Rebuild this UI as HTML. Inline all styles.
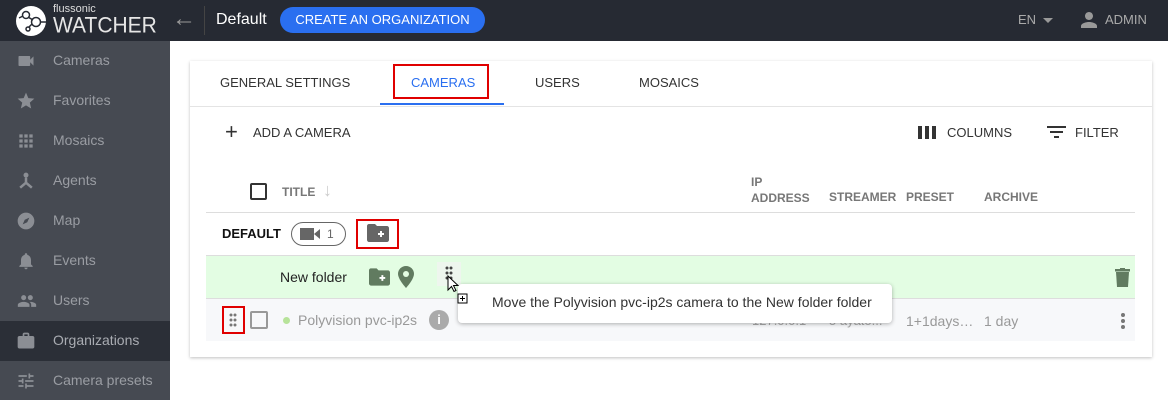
<!DOCTYPE html>
<html><head><meta charset="utf-8"><style>
*{box-sizing:border-box;margin:0;padding:0}
body{width:1168px;height:400px;overflow:hidden;font-family:"Liberation Sans",Arial,sans-serif;background:#fff;position:relative}
.abs{position:absolute}
.hdr{left:0;top:0;width:1168px;height:41px;background:#262a33}
.side{left:0;top:41px;width:170px;height:359px;background:#464a52}
.si{position:absolute;left:0;width:170px;height:40px;color:#9a9da3;font-size:14px;line-height:39px;padding-left:53px}
.si svg{position:absolute;left:15px;top:10px}
.card{left:190px;top:61px;width:962px;height:296px;background:#fff;box-shadow:0 1px 3px rgba(0,0,0,.25)}
.t{font-size:13px;color:#333}
.th{font-size:12px;color:#777;font-weight:bold}
.red{border:2px solid #e00000}
</style></head><body>
<div class="abs hdr"></div>
<svg class="abs" style="left:15px;top:5px" width="32" height="32" viewBox="0 0 32 32"><circle cx="16" cy="16" r="15" fill="#fff"/><circle cx="11" cy="10" r="3.5" fill="none" stroke="#262a33" stroke-width="1.5"/><circle cx="21" cy="17" r="4.5" fill="none" stroke="#262a33" stroke-width="1.5"/><circle cx="13" cy="24" r="2" fill="none" stroke="#262a33" stroke-width="1.5"/><path d="M13 12 L18 15 M17 19 L14 22 M4 13 L8 11 M25 17 L31 17" stroke="#262a33" stroke-width="1.5"/></svg>
<div class="abs" style="left:53px;top:3px;color:#ddd;font-size:11px">flussonic</div>
<div class="abs" style="left:53px;top:14px;color:#e6e6e6;font-size:21px;transform:scaleY(1.05)">WATCHER</div>
<div class="abs" style="left:172px;top:5px;color:#999;font-size:24px">&#8592;</div>
<div class="abs" style="left:204px;top:6px;width:1px;height:29px;background:#444"></div>
<div class="abs" style="left:216px;top:11px;color:#fff;font-size:16px">Default</div>
<div class="abs" style="left:280px;top:7px;width:205px;height:26px;background:#2a6ff0;border-radius:13px;color:#fff;font-size:13px;line-height:26px;text-align:center">CREATE AN ORGANIZATION</div>
<div class="abs" style="left:1018px;top:12px;color:#aaa;font-size:13px">EN</div>
<div class="abs" style="left:1043px;top:18px;width:0;height:0;border-left:5px solid transparent;border-right:5px solid transparent;border-top:5px solid #999"></div>
<svg class="abs" style="left:1077px;top:8px" width="24" height="24" viewBox="0 0 24 24"><path fill="#999" d="M12 12c2.2 0 4-1.8 4-4s-1.8-4-4-4-4 1.8-4 4 1.8 4 4 4zm0 2c-2.7 0-8 1.3-8 4v2h16v-2c0-2.7-5.3-4-8-4z"/></svg>
<div class="abs" style="left:1105px;top:12px;color:#aaa;font-size:13px">ADMIN</div>

<div class="abs side">
<div class="si" style="top:0">Cameras<svg width="22" height="20" viewBox="0 0 24 24"><path fill="#8b8e94" d="M17 10.5V7c0-.6-.4-1-1-1H4c-.6 0-1 .4-1 1v10c0 .6.4 1 1 1h12c.6 0 1-.4 1-1v-3.5l4 4v-11l-4 4z"/></svg></div>
<div class="si" style="top:40px">Favorites<svg width="22" height="20" viewBox="0 0 24 24"><path fill="#8b8e94" d="M12 17.3L18.2 21l-1.6-7L22 9.2l-7.2-.6L12 2 9.2 8.6 2 9.2 7.5 14l-1.7 7z"/></svg></div>
<div class="si" style="top:80px">Mosaics<svg width="22" height="20" viewBox="0 0 24 24"><path fill="#8b8e94" d="M4 4h4v4H4zm6 0h4v4h-4zm6 0h4v4h-4zM4 10h4v4H4zm6 0h4v4h-4zm6 0h4v4h-4zM4 16h4v4H4zm6 0h4v4h-4zm6 0h4v4h-4z"/></svg></div>
<div class="si" style="top:120px">Agents<svg width="22" height="20" viewBox="0 0 24 24"><circle cx="12" cy="5" r="3" fill="#8b8e94"/><path d="M12 8v6L5 20M12 14l7 6" stroke="#8b8e94" stroke-width="3" fill="none"/></svg></div>
<div class="si" style="top:160px">Map<svg width="22" height="20" viewBox="0 0 24 24"><circle cx="12" cy="12" r="10" fill="#8b8e94"/><path d="M16 8l-2.5 5.5L8 16l2.5-5.5z" fill="#464a52"/></svg></div>
<div class="si" style="top:200px">Events<svg width="22" height="20" viewBox="0 0 24 24"><path fill="#8b8e94" d="M12 22c1.1 0 2-.9 2-2h-4c0 1.1.9 2 2 2zm6-6v-5c0-3-1.6-5.6-4.5-6.3V4c0-.8-.7-1.5-1.5-1.5s-1.5.7-1.5 1.5v.7C7.6 5.4 6 8 6 11v5l-2 2v1h16v-1l-2-2z"/></svg></div>
<div class="si" style="top:240px">Users<svg width="24" height="20" viewBox="0 0 24 24"><path fill="#8b8e94" d="M16 11c1.7 0 3-1.3 3-3s-1.3-3-3-3-3 1.3-3 3 1.3 3 3 3zm-8 0c1.7 0 3-1.3 3-3S9.7 5 8 5 5 6.3 5 8s1.3 3 3 3zm0 2c-2.3 0-7 1.2-7 3.5V19h14v-2.5C15 14.2 10.3 13 8 13zm8 0c-.3 0-.6 0-1 .1 1.2.8 2 2 2 3.4V19h6v-2.5c0-2.3-4.7-3.5-7-3.5z"/></svg></div>
<div class="si" style="top:280px;background:#2b2f37;color:#a9acb2">Organizations<svg width="22" height="20" viewBox="0 0 24 24"><path fill="#8b8e94" d="M14 6V4h-4v2h4zM4 8v11h16V8H4zm16-2c1.1 0 2 .9 2 2v11c0 1.1-.9 2-2 2H4c-1.1 0-2-.9-2-2V8c0-1.1.9-2 2-2h4V4c0-1.1.9-2 2-2h4c1.1 0 2 .9 2 2v2h4z"/><rect x="3" y="7" width="18" height="13" fill="#8b8e94"/></svg></div>
<div class="si" style="top:320px">Camera presets<svg width="22" height="20" viewBox="0 0 24 24"><path fill="#8b8e94" d="M3 17v2h6v-2H3zM3 5v2h10V5H3zm10 16v-2h8v-2h-8v-2h-2v6h2zM7 9v2H3v2h4v2h2V9H7zm14 4v-2H11v2h10zm-6-4h2V7h4V5h-4V3h-2v6z"/></svg></div>
</div>

<div class="abs card"></div>
<div class="abs" style="left:190px;top:106px;width:962px;height:1px;background:#e4e4e4"></div>
<div class="abs t" style="left:220px;top:75px">GENERAL SETTINGS</div>
<div class="abs t" style="left:411px;top:75px;color:#2a6ff0">CAMERAS</div>
<div class="abs red" style="left:393px;top:64px;width:96px;height:35px"></div>
<div class="abs" style="left:380px;top:103px;width:124px;height:2px;background:#2a6ff0"></div>
<div class="abs t" style="left:535px;top:75px">USERS</div>
<div class="abs t" style="left:639px;top:75px">MOSAICS</div>

<div class="abs" style="left:225px;top:121px;font-size:22px;color:#333;line-height:22px">+</div>
<div class="abs t" style="left:253px;top:125px">ADD A CAMERA</div>
<div class="abs" style="left:918px;top:126px;width:18px;height:13px;background:repeating-linear-gradient(90deg,#333 0 4px,transparent 4px 7px)"></div>
<div class="abs t" style="left:947px;top:125px">COLUMNS</div>
<div class="abs" style="left:1047px;top:126px;width:19px;height:2px;background:#333"></div>
<div class="abs" style="left:1050px;top:131px;width:13px;height:2px;background:#333"></div>
<div class="abs" style="left:1054px;top:136px;width:5px;height:2px;background:#333"></div>
<div class="abs t" style="left:1075px;top:125px">FILTER</div>

<div class="abs" style="left:250px;top:183px;width:17px;height:17px;border:2px solid #333;border-radius:2px"></div>
<div class="abs th" style="left:282px;top:185px">TITLE</div>
<div class="abs" style="left:323px;top:180px;color:#ccc;font-size:18px">&#8595;</div>
<div class="abs th" style="left:751px;top:174px;line-height:16px">IP<br>ADDRESS</div>
<div class="abs th" style="left:829px;top:190px">STREAMER</div>
<div class="abs th" style="left:906px;top:190px">PRESET</div>
<div class="abs th" style="left:984px;top:190px">ARCHIVE</div>
<div class="abs" style="left:206px;top:212px;width:929px;height:1px;background:#ddd"></div>

<div class="abs" style="left:222px;top:226px;font-size:13px;font-weight:bold;color:#111">DEFAULT</div>
<div class="abs" style="left:291px;top:222px;width:55px;height:24px;border:1px solid #666;border-radius:12px"></div>
<svg class="abs" style="left:300px;top:227px" width="22" height="14" viewBox="0 0 22 14"><rect x="0" y="1" width="14" height="12" fill="#666"/><path d="M14 7l6-5v10z" fill="#666"/></svg>
<div class="abs" style="left:327px;top:227px;font-size:12px;color:#666">1</div>
<div class="abs red" style="left:356px;top:219px;width:43px;height:30px"></div>
<svg class="abs" style="left:367px;top:224px" width="22" height="18" viewBox="0 0 22 18"><path d="M0 2c0-1 .8-2 2-2h6l2 2h10c1 0 2 1 2 2v12c0 1-1 2-2 2H2c-1 0-2-1-2-2z" fill="#666"/><path d="M14 7v6M11 10h6" stroke="#fff" stroke-width="2"/></svg>
<div class="abs" style="left:206px;top:255px;width:929px;height:1px;background:#ddd"></div>

<div class="abs" style="left:206px;top:256px;width:929px;height:42px;background:#e3fde3"></div>
<div class="abs" style="left:280px;top:269px;font-size:14px;color:#222">New folder</div>
<svg class="abs" style="left:369px;top:268px" width="21" height="18" viewBox="0 0 22 18"><path d="M0 2c0-1 .8-2 2-2h6l2 2h10c1 0 2 1 2 2v12c0 1-1 2-2 2H2c-1 0-2-1-2-2z" fill="#617b60"/><path d="M14 7v6M11 10h6" stroke="#fff" stroke-width="2"/></svg>
<svg class="abs" style="left:398px;top:266px" width="16" height="22" viewBox="0 0 16 22"><path d="M8 0C3.6 0 0 3.5 0 7.8 0 13.5 8 22 8 22s8-8.5 8-14.2C16 3.5 12.4 0 8 0z" fill="#617b60"/><circle cx="8" cy="8" r="3" fill="#e3fde3"/></svg>
<div class="abs" style="left:437px;top:262px;width:24px;height:24px;background:#eef6ee"></div>
<svg class="abs" style="left:445px;top:266px" width="8" height="14" viewBox="0 0 8 14"><g fill="#444"><circle cx="2" cy="2" r="1.5"/><circle cx="6" cy="2" r="1.5"/><circle cx="2" cy="7" r="1.5"/><circle cx="6" cy="7" r="1.5"/><circle cx="2" cy="12" r="1.5"/><circle cx="6" cy="12" r="1.5"/></g></svg>
<svg class="abs" style="left:1115px;top:268px" width="15" height="19" viewBox="0 0 15 19"><rect x="0" y="1" width="15" height="2.5" fill="#617b60"/><rect x="5" y="0" width="5" height="2" fill="#617b60"/><path d="M1 4h13l-1 15H2z" fill="#617b60"/></svg>
<div class="abs" style="left:206px;top:298px;width:929px;height:1px;background:#ddd"></div>

<div class="abs" style="left:206px;top:299px;width:929px;height:42px;background:#f7f8fa"></div>
<div class="abs red" style="left:222px;top:306px;width:23px;height:28px"></div>
<svg class="abs" style="left:229px;top:313px" width="8" height="14" viewBox="0 0 8 14"><g fill="#777"><circle cx="2" cy="2" r="1.5"/><circle cx="6" cy="2" r="1.5"/><circle cx="2" cy="7" r="1.5"/><circle cx="6" cy="7" r="1.5"/><circle cx="2" cy="12" r="1.5"/><circle cx="6" cy="12" r="1.5"/></g></svg>
<div class="abs" style="left:250px;top:311px;width:18px;height:18px;border:2px solid #999;border-radius:2px"></div>
<div class="abs" style="left:283px;top:317px;width:7px;height:7px;border-radius:50%;background:#b7e39a"></div>
<div class="abs" style="left:298px;top:312px;font-size:14px;color:#999">Polyvision pvc-ip2s</div>
<div class="abs" style="left:429px;top:310px;width:20px;height:20px;border-radius:50%;background:#aaa;color:#fff;font-size:13px;font-weight:bold;text-align:center;line-height:20px">i</div>
<div class="abs" style="left:752px;top:313px;font-size:13px;color:#aaa">127.0.0.1</div>
<div class="abs" style="left:829px;top:313px;font-size:13px;color:#aaa">5 ayato...</div>
<div class="abs" style="left:906px;top:313px;font-size:14px;color:#999">1+1days…</div>
<div class="abs" style="left:984px;top:313px;font-size:14px;color:#999">1 day</div>
<svg class="abs" style="left:1120px;top:312px" width="6" height="18" viewBox="0 0 6 18"><g fill="#777"><circle cx="3" cy="3" r="2"/><circle cx="3" cy="9" r="2"/><circle cx="3" cy="15" r="2"/></g></svg>

<div class="abs" style="left:458px;top:284px;width:434px;height:39px;background:#fff;border-radius:4px;box-shadow:0 1px 4px rgba(0,0,0,.3)"></div>
<div class="abs" style="left:492px;top:294px;font-size:14px;color:#333">Move the Polyvision pvc-ip2s camera to the New folder folder</div>
<svg class="abs" style="left:447px;top:275px" width="24" height="30" viewBox="0 0 24 30"><path d="M1 1v14l3.5-3.5 2.5 5 2-1-2.5-5H11z" fill="#fff" stroke="#000"/><rect x="11" y="19" width="9" height="9" fill="#fff" stroke="#000"/><path d="M15.5 21v5M13 23.5h5" stroke="#000"/></svg>
</body></html>
